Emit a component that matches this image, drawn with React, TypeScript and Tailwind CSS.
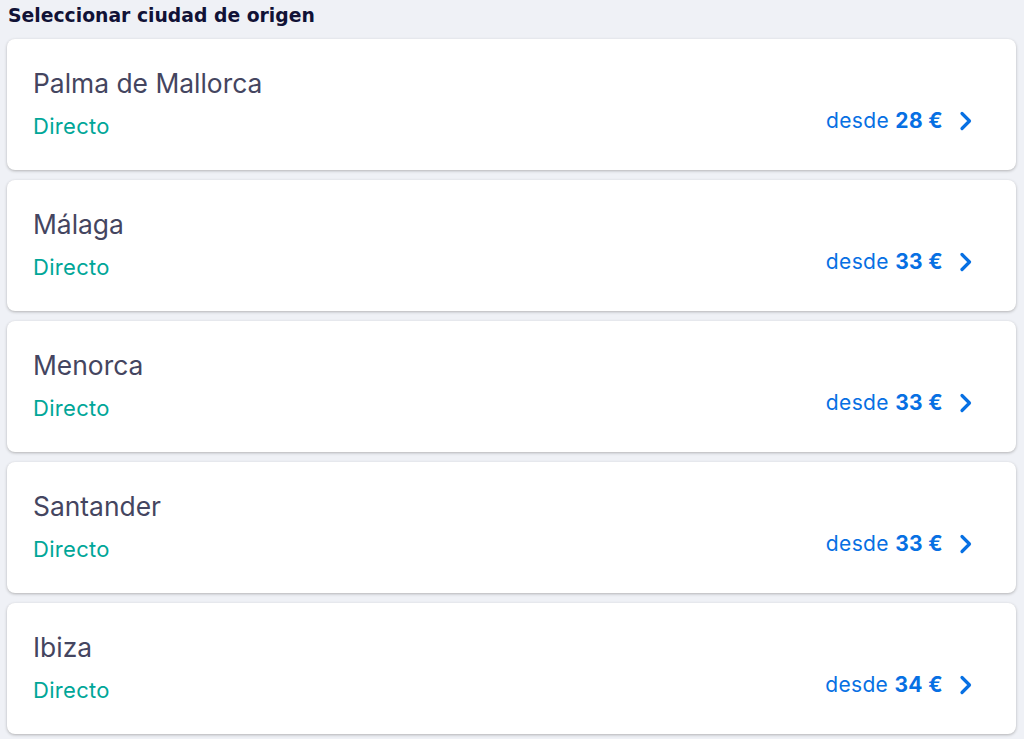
import React from "react";

const cities = [
  { name: "Palma de Mallorca", price: 28 },
  { name: "Málaga", price: 33 },
  { name: "Menorca", price: 33 },
  { name: "Santander", price: 33 },
  { name: "Ibiza", price: 34 },
];

export default function App() {
  return (
    <div className="w-[1024px] h-[739px] overflow-hidden bg-[#eff1f6] px-[7px] pt-[4px]" style={{ fontFamily: "Inter, 'Noto Sans', sans-serif" }}>
      <h2 className="text-[18.8px] leading-[24px] font-bold text-[#111236] pl-[1px]" style={{ fontFamily: "'DejaVu Sans', sans-serif" }}>Seleccionar ciudad de origen</h2>
      <div className="mt-[11px] flex flex-col gap-[10px]">
        {cities.map((c) => (
          <div key={c.name} className="h-[131px] w-[1009px] rounded-[8px] bg-white shadow-[0_1px_3px_rgba(37,32,31,0.3)] flex justify-between pl-[26px] pr-[44px]">
            <div className="flex flex-col pt-[28px]">
              <div className="text-[26.4px] leading-[32px] text-[#444560]">{c.name}</div>
              <div className="mt-[14px] text-[22px] leading-[26px] text-[#00a698] tracking-[0.3px]">Directo</div>
            </div>
            <div className="flex items-center h-[24px] mt-[70px] gap-[16px]">
              <span className="text-[21px] leading-[24px] text-[#0770e3] tracking-[0.35px]">
                desde <span className="font-bold">{c.price} €</span>
              </span>
              <svg width="13" height="20" viewBox="0 0 13 20" fill="none">
                <path d="M3 2.5l7.5 7.5-7.5 7.5" stroke="#0770e3" strokeWidth="3.2" strokeLinecap="round" strokeLinejoin="round" />
              </svg>
            </div>
          </div>
        ))}
      </div>
    </div>
  );
}
